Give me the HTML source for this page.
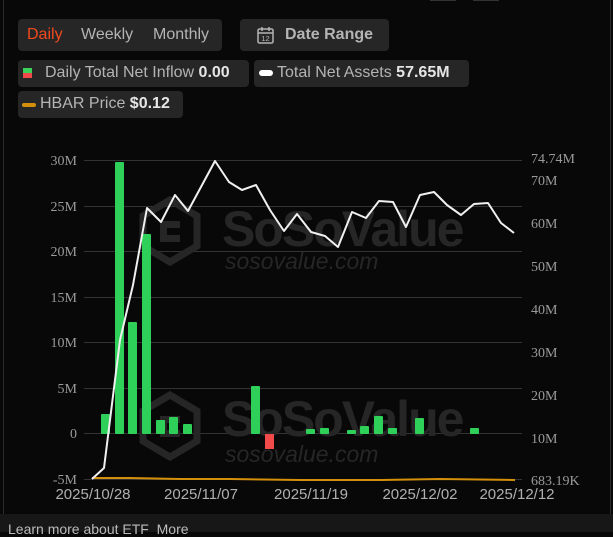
<!DOCTYPE html>
<html><head><meta charset="utf-8"><style>
*{margin:0;padding:0;box-sizing:border-box}
body{width:613px;height:532px;overflow:hidden;background:#080808;font-family:"Liberation Sans",sans-serif;position:relative}
.bx{position:absolute;background:#262626;border-radius:4px;color:#b4b4b4;font-size:16px;white-space:nowrap}
.b{color:#e6e6e6;font-weight:bold}
</style></head><body>
<div style="position:absolute;left:3px;top:0;width:1px;height:514px;background:#2a2a2a"></div>
<div style="position:absolute;left:610px;top:0;width:1px;height:514px;background:#2a2a2a"></div>
<div style="position:absolute;left:430px;top:0;width:26px;height:1px;background:#333"></div>
<div style="position:absolute;left:473px;top:0;width:26px;height:1px;background:#333"></div>

<div class="bx" style="left:18px;top:19px;width:204px;height:32px;font-size:16px">
 <span style="position:absolute;left:9px;top:7px;color:#f04a1e">Daily</span>
 <span style="position:absolute;left:63px;top:7px">Weekly</span>
 <span style="position:absolute;left:135px;top:7px">Monthly</span>
</div>
<div class="bx" style="left:240px;top:19px;width:149px;height:32px">
 <svg style="position:absolute;left:16px;top:6px" width="20" height="20" viewBox="0 0 20 20" fill="none" stroke="#b4b4b4" stroke-width="1.5"><rect x="2" y="4" width="15" height="14" rx="1.5"/><path d="M2 8h15M6 2v4M13 2v4"/><text x="9.5" y="16" font-size="7.5" fill="#b4b4b4" stroke="none" text-anchor="middle" font-family="Liberation Sans">12</text></svg>
 <span style="position:absolute;left:45px;top:7px;font-weight:bold">Date Range</span>
</div>

<div class="bx" style="left:18px;top:60px;width:231px;height:27px">
 <span style="position:absolute;left:5px;top:8px;width:9px;height:5px;background:#3ad15a"></span>
 <span style="position:absolute;left:5px;top:13px;width:9px;height:5px;background:#f04a4a"></span>
 <span style="position:absolute;left:27px;top:4px">Daily Total Net Inflow <span class="b">0.00</span></span>
</div>
<div class="bx" style="left:254px;top:60px;width:215px;height:27px">
 <span style="position:absolute;left:5px;top:10px;width:14px;height:6px;background:#fff;border-radius:3px"></span>
 <span style="position:absolute;left:23px;top:4px">Total Net Assets <span class="b">57.65M</span></span>
</div>
<div class="bx" style="left:18px;top:91px;width:165px;height:27px">
 <span style="position:absolute;left:4px;top:12px;width:14px;height:4px;background:#d4900a;border-radius:2px"></span>
 <span style="position:absolute;left:22px;top:4px">HBAR Price <span class="b">$0.12</span></span>
</div>

<svg style="position:absolute;left:0;top:0" width="613" height="514" viewBox="0 0 613 514">
 <g stroke="#333" stroke-width="1">
  <path d="M84 160.5H522M84 206.5H522M84 251.5H522M84 297.5H522M84 342.5H522M84 388.5H522M84 433.5H522M84 479.5H522"/>
 </g>
 <g font-family="Liberation Serif" font-size="14" fill="#9a9a9a" text-anchor="end">
  <text x="77" y="165">30M</text><text x="77" y="211">25M</text><text x="77" y="256">20M</text><text x="77" y="302">15M</text><text x="77" y="347">10M</text><text x="77" y="393">5M</text><text x="77" y="438">0</text><text x="77" y="484">-5M</text>
 </g>
 <g font-family="Liberation Serif" font-size="14" fill="#9a9a9a">
  <text x="531" y="163">74.74M</text><text x="531" y="185">70M</text><text x="531" y="228">60M</text><text x="531" y="271">50M</text><text x="531" y="314">40M</text><text x="531" y="357">30M</text><text x="531" y="400">20M</text><text x="531" y="443">10M</text><text x="531" y="485">683.19K</text>
 </g>
 <g font-family="Liberation Sans" font-size="15" fill="#b0b0b0" text-anchor="middle">
  <text x="93" y="499">2025/10/28</text><text x="201" y="499">2025/11/07</text><text x="311" y="499">2025/11/19</text><text x="420" y="499">2025/12/02</text><text x="517" y="499">2025/12/12</text>
 </g>
 <g fill="#262626">
  <g transform="translate(140,197)"><path d="M30 3L57 19V49L30 65L3 49V19Z" fill="none" stroke="#262626" stroke-width="7"/><path d="M20 24h20v7H27v7h13v7H20Z"/></g>
  <text x="222" y="246" font-family="Liberation Sans" font-weight="bold" font-size="50" letter-spacing="-2">SoSoValue</text>
  <text x="225" y="269" font-family="Liberation Sans" font-style="italic" font-size="23">sosovalue.com</text>
  <g transform="translate(140,392)"><path d="M30 3L57 19V49L30 65L3 49V19Z" fill="none" stroke="#262626" stroke-width="7"/><path d="M20 24h20v7H27v7h13v7H20Z"/></g>
  <text x="222" y="436" font-family="Liberation Sans" font-weight="bold" font-size="50" letter-spacing="-2">SoSoValue</text>
  <text x="225" y="462" font-family="Liberation Sans" font-style="italic" font-size="23">sosovalue.com</text>
 </g>
 <g fill="#2fd05a">
  <rect x="101" y="414" width="9" height="20" rx="1"/>
  <rect x="115" y="162" width="9" height="272" rx="1"/>
  <rect x="128" y="322" width="9" height="112" rx="1"/>
  <rect x="142" y="234" width="9" height="200" rx="1"/>
  <rect x="156" y="420" width="9" height="14" rx="1"/>
  <rect x="169" y="417" width="9" height="17" rx="1"/>
  <rect x="183" y="424" width="9" height="10" rx="1"/>
  <rect x="251" y="386" width="9" height="48" rx="1"/>
  <rect x="306" y="429" width="9" height="5" rx="1"/>
  <rect x="320" y="428" width="9" height="6" rx="1"/>
  <rect x="347" y="430" width="9" height="4" rx="1"/>
  <rect x="360" y="426" width="9" height="8" rx="1"/>
  <rect x="374" y="416" width="9" height="18" rx="1"/>
  <rect x="388" y="428" width="9" height="6" rx="1"/>
  <rect x="415" y="418" width="9" height="16" rx="1"/>
  <rect x="470" y="428" width="9" height="6" rx="1"/>
 </g>
 <rect x="265" y="434" width="9" height="15" fill="#f04a4a"/>
 <polyline fill="none" stroke="#d4900a" stroke-width="2" points="92,478 130,478 180,479 230,479 300,480 380,480 440,479 515,480"/>
 <polyline fill="none" stroke="#f0f0f0" stroke-width="2" stroke-linejoin="round" points="92,479 104,468 120,340 133,285 147,208 161,222 175,195 188,211 215,161 229,182 242,190 256,185 270,210 284,231 297,214 311,232 325,236 338,247 352,212 366,218 379,201 393,202 406,227 420,195 434,192 447,205 461,215 474,204 488,203 501,223 514,233"/>
</svg>

<div style="position:absolute;left:0;top:514px;width:613px;height:18px;background:#171717"></div>
<div style="position:absolute;left:8px;top:521px;font-size:14px;color:#bbb;white-space:nowrap">Learn more about ETF&nbsp;&nbsp;More</div>
</body></html>
